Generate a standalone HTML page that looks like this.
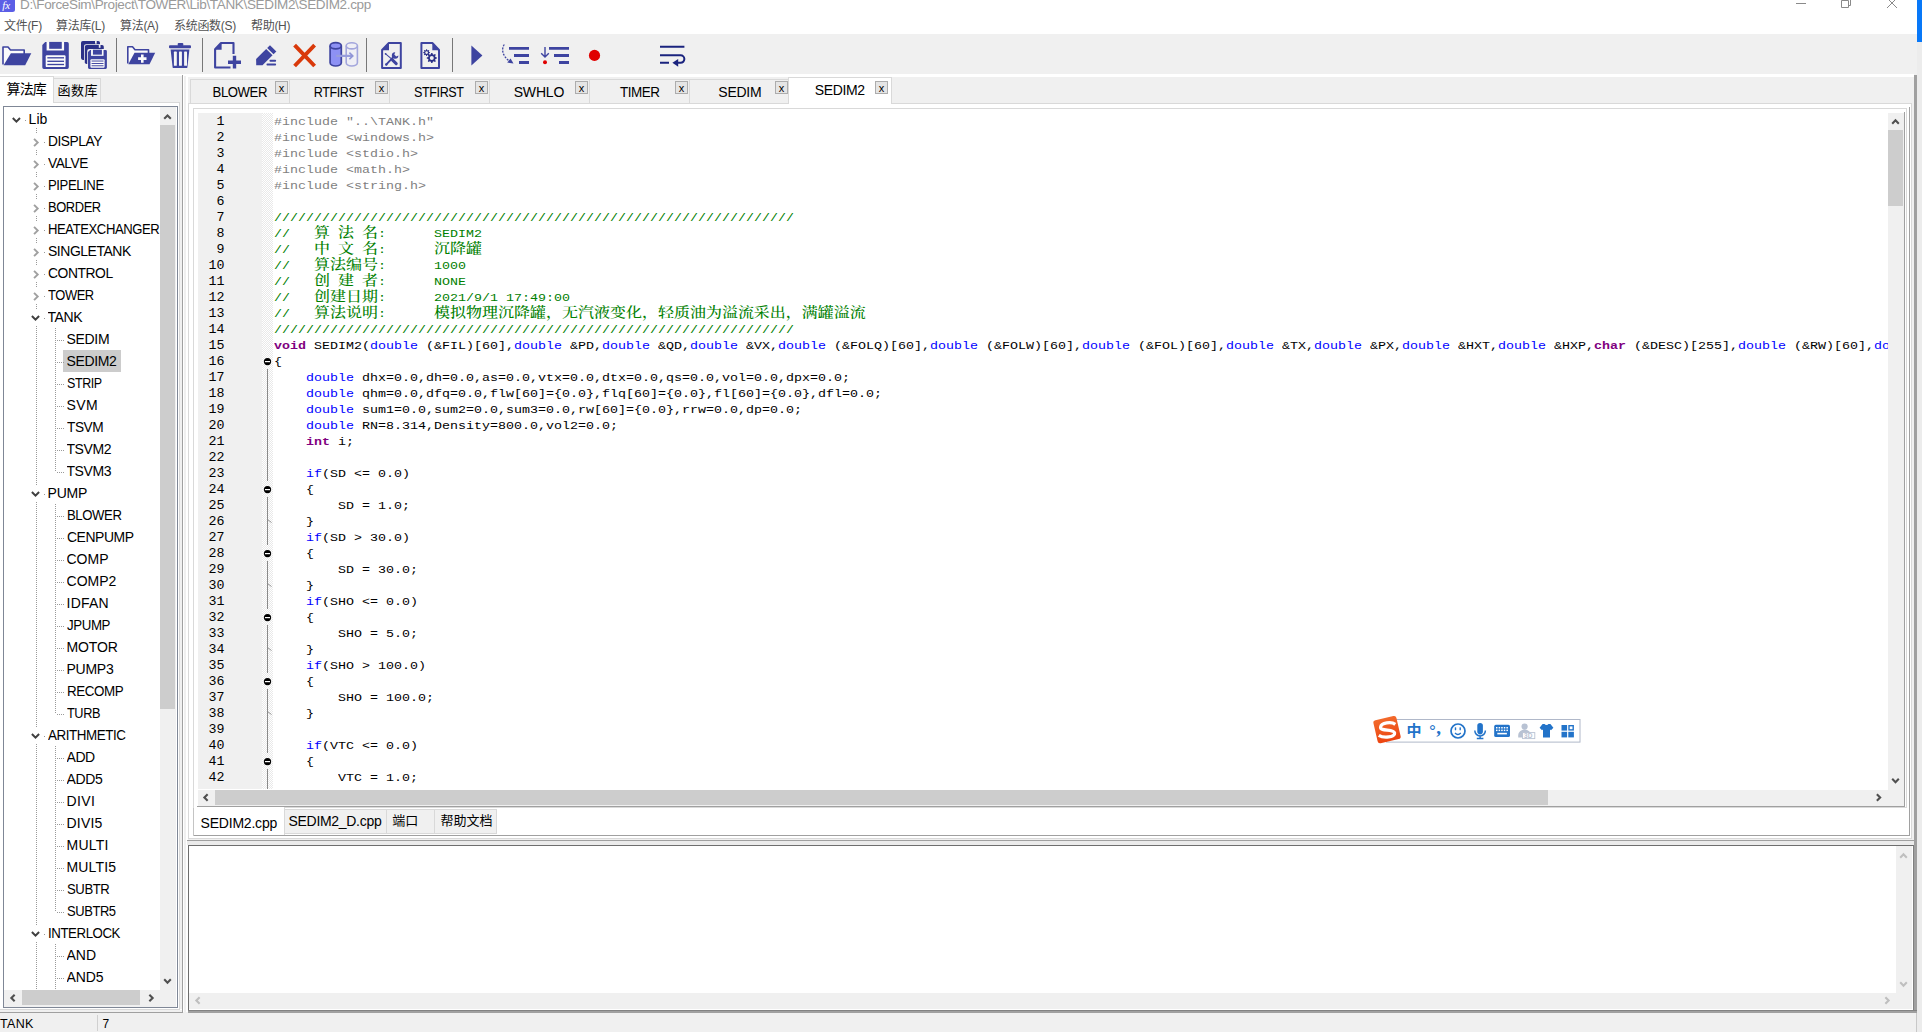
<!DOCTYPE html><html lang="zh"><head><meta charset="utf-8"><title>SEDIM2.cpp</title><style>
*{box-sizing:border-box;margin:0;padding:0}
html,body{width:1922px;height:1032px;overflow:hidden;background:#f0f0f0}
body{position:relative;font-family:"Liberation Sans","Noto Sans CJK SC",sans-serif;color:#000}
div,span,svg{position:absolute}
.t{white-space:nowrap;line-height:1}
.ui{font-size:14px;letter-spacing:0px}
.cj{font-family:"Liberation Sans","Noto Sans CJK SC",sans-serif}
.mono{font-family:"Liberation Mono","Noto Serif CJK SC",monospace;font-size:13.333px;white-space:pre;line-height:16px;height:16px}
.mono .s{left:0;top:0;white-space:pre;line-height:16px;transform:scaleY(0.885);transform-origin:0 11.55px}
.mono .z{top:0.9px;white-space:pre;font-family:"Liberation Mono","Noto Serif CJK SC",monospace;font-size:13.333px;font-weight:500;line-height:16px;transform:scaleX(1.2);transform-origin:0 0}
.pp{color:#7f7f7f}.cm{color:#008000}.kb{color:#0000ff}.kp{color:#800080;font-weight:bold}
.ln{font-family:"Liberation Mono",monospace;font-size:13.333px;line-height:16px;height:16px;text-align:right;color:#000;transform:scaleY(0.89);transform-origin:0 11.55px}

</style></head><body>
<div style="left:0px;top:0px;width:1917px;height:34px;background:#fff;"></div>
<div style="left:1917px;top:0px;width:5px;height:42px;background:#0878f8;"></div>
<div style="left:1917px;top:42px;width:5px;height:990px;background:#ececec;"></div>
<svg style="left:0;top:0" width="15" height="12" viewBox="0 0 15 12"><path d="M0 0H15V9.5a2.5 2.5 0 0 1-2.5 2.5H0z" fill="#5b5ee6"/><text x="2.2" y="8.5" font-family="Liberation Serif,serif" font-style="italic" font-size="11" fill="#fff">fx</text></svg>
<div class="t" style="left:20px;top:-2.2px;font-size:13.5px;color:#9a9a9a;letter-spacing:-0.34px" id="title">D:\ForceSim\Project\TOWER\Lib\TANK\SEDIM2\SEDIM2.cpp</div>
<svg style="left:1790px;top:0" width="120" height="12" viewBox="0 0 120 12" fill="none" stroke="#8a8a8a" stroke-width="1"><path d="M6 3.5H16"/><path d="M51.5 0.5H58.5V7.5H51.5Z"/><path d="M58.5 5.5H60.5V-1"/><path d="M97 -2L107 8M107 -2L97 8"/></svg>
<div class="t cj" id="menu0" style="left:4px;top:19px;font-size:12px;line-height:14px;color:#525252;letter-spacing:-0.3px">文件(F)</div>
<div class="t cj" id="menu1" style="left:56px;top:19px;font-size:12px;line-height:14px;color:#525252;letter-spacing:-0.3px">算法库(L)</div>
<div class="t cj" id="menu2" style="left:120px;top:19px;font-size:12px;line-height:14px;color:#525252;letter-spacing:-0.3px">算法(A)</div>
<div class="t cj" id="menu3" style="left:174px;top:19px;font-size:12px;line-height:14px;color:#525252;letter-spacing:-0.3px">系统函数(S)</div>
<div class="t cj" id="menu4" style="left:251px;top:19px;font-size:12px;line-height:14px;color:#525252;letter-spacing:-0.3px">帮助(H)</div>
<div style="left:0px;top:74px;width:1914px;height:2px;background:#fff;"></div>
<div style="left:186px;top:76px;width:1728px;height:1px;background:#fff;"></div>
<div style="left:182px;top:75px;width:1px;height:937px;background:#a0a0a0;"></div>
<div style="left:183px;top:76px;width:1px;height:936px;background:#fff;"></div>
<div style="left:186px;top:76px;width:2px;height:936px;background:#fff;"></div>
<div style="left:1914px;top:75px;width:3px;height:938px;background:#a0a0a0;"></div>
<div style="left:1916px;top:1013px;width:1px;height:19px;background:#c8c8c8;"></div>
<div style="left:0px;top:102px;width:180px;height:908px;border:1px solid #d9d9d9;border-left:none;"></div>
<div style="left:0px;top:1009px;width:182px;height:1px;background:#fff;"></div>
<div style="left:0px;top:1012px;width:183px;height:1px;background:#a0a0a0;"></div>
<svg style="left:0;top:34px" width="720" height="40" viewBox="0 34 720 40"><rect x="116" y="38" width="1" height="34" fill="#777"/><rect x="202" y="38" width="1" height="34" fill="#777"/><rect x="366" y="38" width="1" height="34" fill="#777"/><rect x="452" y="38" width="1" height="34" fill="#777"/><path d="M3 64.5V47H8L10.5 50H24.2V54" fill="#fbfbfb" stroke="#3e44a0" stroke-width="1.6" stroke-linejoin="round"/><path d="M10.9 53.3H31.3L25.2 65.2H3.6Z" fill="#3e44a0"/><path d="M45.214999999999996 42.1H67.2a1.6 1.6 0 0 1 1.6 1.6V67.30000000000001a1.6 1.6 0 0 1 -1.6 1.6H43.9a1.6 1.6 0 0 1 -1.6 -1.6V45.015Z" fill="#3e44a0"/><rect x="46.592999999999996" y="41.9" width="17.490000000000002" height="8.5884" fill="#fbfbfb"/><rect x="49.19" y="41.9" width="12.587499999999999" height="6.9" fill="#3e44a0"/><rect x="45.692" y="55.205200000000005" width="19.875" height="11.8992" rx="1.2" fill="#fbfbfb"/><rect x="47.334999999999994" y="57.1348" width="16.695" height="1.34" fill="#3e44a0"/><rect x="47.334999999999994" y="60.6188" width="16.695" height="1.34" fill="#3e44a0"/><rect x="47.334999999999994" y="63.8348" width="16.695" height="1.34" fill="#3e44a0"/><rect x="81" y="40.9" width="19" height="19" rx="1.8" fill="#2b3088"/><rect x="95" y="40.5" width="1.7" height="3.2" fill="#f0f0f0"/><rect x="84" y="44.2" width="20.6" height="20" rx="2" fill="#f0f0f0"/><rect x="84.8" y="45" width="19" height="19" rx="1.8" fill="#2b3088"/><rect x="98.8" y="44.6" width="1.7" height="3.2" fill="#f0f0f0"/><rect x="87.2" y="49.1" width="20.6" height="20.4" rx="2" fill="#f0f0f0"/><path d="M90.079 49.9H105.62a1.2800000000000002 1.2800000000000002 0 0 1 1.2800000000000002 1.2800000000000002V67.62a1.2800000000000002 1.2800000000000002 0 0 1 -1.2800000000000002 1.2800000000000002H89.28a1.2800000000000002 1.2800000000000002 0 0 1 -1.2800000000000002 -1.2800000000000002V51.979Z" fill="#3e44a0"/><rect x="91.0618" y="49.699999999999996" width="12.474" height="6.147" fill="#fbfbfb"/><rect x="92.914" y="49.699999999999996" width="8.9775" height="4.95" fill="#3e44a0"/><rect x="90.4192" y="59.191" width="14.174999999999999" height="8.436" rx="0.96" fill="#fbfbfb"/><rect x="91.591" y="60.559" width="11.907" height="0.9500000000000001" fill="#3e44a0"/><rect x="91.591" y="63.028999999999996" width="11.907" height="0.9500000000000001" fill="#3e44a0"/><rect x="91.591" y="65.309" width="11.907" height="0.9500000000000001" fill="#3e44a0"/><path d="M127.8 63.5V46.8H132.5L135 49.8H148.5V53.5" fill="#fbfbfb" stroke="#3e44a0" stroke-width="1.6" stroke-linejoin="round"/><path d="M134.5 52.8H155.2L149.5 64.3H128.3Z" fill="#3e44a0"/><path d="M142.3 54.4V62.8M138.1 58.6H146.5" stroke="#fbfbfb" stroke-width="2.6"/><rect x="177.7" y="43" width="5.6" height="3" rx="1" fill="#3e44a0"/><rect x="169" y="45.3" width="22" height="3" rx="1" fill="#3e44a0"/><path d="M170.6 49.6H189.4L187.4 67.2a1 1 0 0 1-1 .9H173.6a1 1 0 0 1-1-.9Z" fill="#3e44a0"/><rect x="173.9" y="51.6" width="2.9" height="14.2" rx="0.6" fill="#f6f6f6"/><rect x="179.0" y="51.6" width="2.9" height="14.2" rx="0.6" fill="#f6f6f6"/><rect x="184.1" y="51.6" width="2.9" height="14.2" rx="0.6" fill="#f6f6f6"/><path d="M233.5 54V43H221L215.1 49.2V67.5H230.5" fill="none" stroke="#3e44a0" stroke-width="2.1" stroke-linejoin="round"/><path d="M221.6 43V49.8H215Z" fill="#3e44a0"/><path d="M234.5 55.8V68.6M228 62.2H241" stroke="#3e44a0" stroke-width="3.4"/><g transform="translate(256.2,65.3) rotate(-45)" fill="#3e44a0"><path d="M0 0L4.4 -4.5H18.6V4.5H4.4Z"/><rect x="20" y="-4.5" width="4" height="9"/></g><path d="M270.4 60.7H275.2M267.4 64.5H275.2" stroke="#3e44a0" stroke-width="1.9" stroke-linecap="round"/><path d="M294.6 45.2L314.6 66M314.6 45.2L294.6 66" stroke="#d9390a" stroke-width="3.9"/><path d="M330.1 45.8V62.8A5.6 3.2 0 0 0 341.3 62.8V45.8" fill="#8d91f4" stroke="#3e44a0" stroke-width="1.7"/><ellipse cx="335.7" cy="45.8" rx="5.6" ry="3.1" fill="#8d91f4" stroke="#3e44a0" stroke-width="1.7"/><path d="M346.2 45.8V62.8A5.6 3.2 0 0 0 357.4 62.8V45.8" fill="#efeff5" stroke="#a3a6dc" stroke-width="1.6"/><ellipse cx="351.8" cy="45.8" rx="5.6" ry="3.1" fill="#efeff5" stroke="#a3a6dc" stroke-width="1.6"/><path d="M337 55.9H352" fill="none" stroke="#989ddb" stroke-width="2.3" stroke-linecap="round"/><path d="M349.4 52.6L352.8 55.9L349.4 59.2" fill="none" stroke="#8f94d6" stroke-width="1.6"/><path d="M400.8 43.1H388.6L382.1 50V67.9H400.8Z" fill="none" stroke="#3e44a0" stroke-width="2" stroke-linejoin="round"/><path d="M389 43.2V50.3H382.2Z" fill="#3e44a0"/><path d="M385.6 53.9L391.8 59.2" stroke="#3e44a0" stroke-width="1.1" stroke-linecap="round"/><circle cx="385.6" cy="53.8" r="0.9" fill="#3e44a0"/><path d="M392.6 60.2L396.2 63.6" stroke="#3e44a0" stroke-width="3" stroke-linecap="round"/><path d="M386.4 64.4L392.8 57.6" stroke="#3e44a0" stroke-width="1.9" stroke-linecap="round"/><circle cx="386.3" cy="64.5" r="1.2" fill="#3e44a0"/><path d="M395.3 52.2A3.3 3.3 0 1 0 398.4 55.6L396.2 56.6L394.3 54.6Z" fill="#3e44a0"/><path d="M421.4 43.1H432.6L439 50V67.9H421.4Z" fill="none" stroke="#3e44a0" stroke-width="2" stroke-linejoin="round"/><path d="M432.3 43.2V50.3H439.2Z" fill="#3e44a0"/><path d="M429.98 52.20L429.98 53.00L429.01 53.28L428.78 53.82L429.27 54.70L428.70 55.27L427.82 54.78L427.28 55.01L427.00 55.98L426.20 55.98L425.92 55.01L425.38 54.78L424.50 55.27L423.93 54.70L424.42 53.82L424.19 53.28L423.22 53.00L423.22 52.20L424.19 51.92L424.42 51.38L423.93 50.50L424.50 49.93L425.38 50.42L425.92 50.19L426.20 49.22L427.00 49.22L427.28 50.19L427.82 50.42L428.70 49.93L429.27 50.50L428.78 51.38L429.01 51.92ZM427.95000000000005 52.6A1.35 1.35 0 1 0 425.25 52.6A1.35 1.35 0 1 0 427.95000000000005 52.6Z" fill="#2b3088" fill-rule="evenodd"/><path d="M436.86 57.40L436.86 58.60L435.46 59.03L435.12 59.86L435.81 61.16L434.96 62.01L433.66 61.32L432.83 61.66L432.40 63.06L431.20 63.06L430.77 61.66L429.94 61.32L428.64 62.01L427.79 61.16L428.48 59.86L428.14 59.03L426.74 58.60L426.74 57.40L428.14 56.97L428.48 56.14L427.79 54.84L428.64 53.99L429.94 54.68L430.77 54.34L431.20 52.94L432.40 52.94L432.83 54.34L433.66 54.68L434.96 53.99L435.81 54.84L435.12 56.14L435.46 56.97ZM433.8 58.0A2.0 2.0 0 1 0 429.8 58.0A2.0 2.0 0 1 0 433.8 58.0Z" fill="#2b3088" fill-rule="evenodd"/><path d="M471.4 45.5L482.4 55.5L471.4 65.4Z" fill="#3e44a0"/><path d="M509 48.4H529M514 55.5H529M519 62.5H529" stroke="#3e44a0" stroke-width="2.8"/><path d="M504.3 44.5C500.5 50 503.5 57.5 510.5 61.8" fill="none" stroke="#3e44a0" stroke-width="1.3" stroke-dasharray="2 1.2"/><path d="M513.5 63.4L507.2 62.6L510.6 58.4Z" fill="#3e44a0"/><path d="M549 48.4H569M554 55.5H569M559 62.5H569" stroke="#3e44a0" stroke-width="2.8"/><path d="M545 47V57M541.2 53.2L545 57L548.8 53.2" fill="none" stroke="#3e44a0" stroke-width="1.4"/><circle cx="545" cy="62.2" r="2" fill="#e00000"/><circle cx="594.5" cy="55.4" r="5.6" fill="#e00000"/><path d="M660 46.8H684.4M660 55.3H680.6A3.7 3.7 0 0 1 680.6 62.8H676M660 62.8H669" fill="none" stroke="#1a237e" stroke-width="2"/><path d="M672.4 62.8L678.2 59V66.8Z" fill="#1a237e"/></svg>
<div style="left:0px;top:102px;width:180px;height:908px;background:#fff;border:1px solid #d9d9d9;border-left:none;"></div>
<div style="left:0px;top:76px;width:54px;height:27px;background:#fff;border:1px solid #d9d9d9;border-left:none;border-bottom:none;"></div>
<div style="left:53px;top:78px;width:48px;height:25px;background:#f0f0f0;border:1px solid #d9d9d9;"></div>
<div class="t cj" id="ltab0" style="left:6.5px;top:79.5px;font-size:14px;line-height:18px;letter-spacing:-0.85px">算法库</div>
<div class="t cj" id="ltab1" style="left:57.6px;top:82.3px;font-size:13px;line-height:18px;letter-spacing:0.5px">函数库</div>
<div style="left:3px;top:106px;width:175px;height:902px;background:#fff;border:1px solid #7f8796;"></div>
<div style="left:160px;top:107px;width:16px;height:883px;background:#f0f0f0;"></div>
<div style="left:160px;top:125px;width:15px;height:584px;background:#cdcdcd;"></div>
<div style="left:4px;top:990px;width:172px;height:17px;background:#f0f0f0;"></div>
<div style="left:22px;top:990px;width:118px;height:15px;background:#cdcdcd;"></div>
<div style="left:28.5px;top:111px;width:130px;height:16px;overflow:hidden"><div class="t ui" id="tr0" style="left:0;top:0;line-height:16px;letter-spacing:0.1px;">Lib</div></div><div style="left:47.5px;top:133px;width:130px;height:16px;overflow:hidden"><div class="t ui" id="tr1" style="left:0;top:0;line-height:16px;letter-spacing:-0.45px;transform:scaleX(0.9816);transform-origin:0 0;">DISPLAY</div></div><div style="left:47.5px;top:155px;width:130px;height:16px;overflow:hidden"><div class="t ui" id="tr2" style="left:0;top:0;line-height:16px;letter-spacing:-0.45px;transform:scaleX(0.9782);transform-origin:0 0;">VALVE</div></div><div style="left:47.5px;top:177px;width:130px;height:16px;overflow:hidden"><div class="t ui" id="tr3" style="left:0;top:0;line-height:16px;letter-spacing:-0.45px;transform:scaleX(0.938);transform-origin:0 0;">PIPELINE</div></div><div style="left:47.5px;top:199px;width:130px;height:16px;overflow:hidden"><div class="t ui" id="tr4" style="left:0;top:0;line-height:16px;letter-spacing:-0.45px;transform:scaleX(0.922);transform-origin:0 0;">BORDER</div></div><div style="left:47.5px;top:221px;width:112px;height:16px;overflow:hidden"><div class="t ui" id="tr5" style="left:0;top:0;line-height:16px;letter-spacing:-0.45px;transform:scaleX(0.9348);transform-origin:0 0;">HEATEXCHANGER</div></div><div style="left:47.5px;top:243px;width:130px;height:16px;overflow:hidden"><div class="t ui" id="tr6" style="left:0;top:0;line-height:16px;letter-spacing:-0.45px;transform:scaleX(0.9957);transform-origin:0 0;">SINGLETANK</div></div><div style="left:47.5px;top:265px;width:130px;height:16px;overflow:hidden"><div class="t ui" id="tr7" style="left:0;top:0;line-height:16px;letter-spacing:-0.45px;transform:scaleX(0.9907);transform-origin:0 0;">CONTROL</div></div><div style="left:47.5px;top:287px;width:130px;height:16px;overflow:hidden"><div class="t ui" id="tr8" style="left:0;top:0;line-height:16px;letter-spacing:-0.45px;transform:scaleX(0.9228);transform-origin:0 0;">TOWER</div></div><div style="left:47.5px;top:309px;width:130px;height:16px;overflow:hidden"><div class="t ui" id="tr9" style="left:0;top:0;line-height:16px;letter-spacing:-0.4px;">TANK</div></div><div style="left:66.5px;top:331px;width:130px;height:16px;overflow:hidden"><div class="t ui" id="tr10" style="left:0;top:0;line-height:16px;letter-spacing:-0.32px;">SEDIM</div></div><div style="left:63px;top:350px;width:58px;height:22px;background:#cccccc"></div><div style="left:66.5px;top:353px;width:130px;height:16px;overflow:hidden"><div class="t ui" id="tr11" style="left:0;top:0;line-height:16px;letter-spacing:-0.36px;">SEDIM2</div></div><div style="left:66.5px;top:375px;width:130px;height:16px;overflow:hidden"><div class="t ui" id="tr12" style="left:0;top:0;line-height:16px;letter-spacing:-0.45px;transform:scaleX(0.8927);transform-origin:0 0;">STRIP</div></div><div style="left:66.5px;top:397px;width:130px;height:16px;overflow:hidden"><div class="t ui" id="tr13" style="left:0;top:0;line-height:16px;letter-spacing:0.4px;">SVM</div></div><div style="left:66.5px;top:419px;width:130px;height:16px;overflow:hidden"><div class="t ui" id="tr14" style="left:0;top:0;line-height:16px;letter-spacing:-0.45px;transform:scaleX(0.9768);transform-origin:0 0;">TSVM</div></div><div style="left:66.5px;top:441px;width:130px;height:16px;overflow:hidden"><div class="t ui" id="tr15" style="left:0;top:0;line-height:16px;letter-spacing:-0.43px;">TSVM2</div></div><div style="left:66.5px;top:463px;width:130px;height:16px;overflow:hidden"><div class="t ui" id="tr16" style="left:0;top:0;line-height:16px;letter-spacing:-0.43px;">TSVM3</div></div><div style="left:47.5px;top:485px;width:130px;height:16px;overflow:hidden"><div class="t ui" id="tr17" style="left:0;top:0;line-height:16px;letter-spacing:-0.2px;">PUMP</div></div><div style="left:66.5px;top:507px;width:130px;height:16px;overflow:hidden"><div class="t ui" id="tr18" style="left:0;top:0;line-height:16px;letter-spacing:-0.45px;transform:scaleX(0.9392);transform-origin:0 0;">BLOWER</div></div><div style="left:66.5px;top:529px;width:130px;height:16px;overflow:hidden"><div class="t ui" id="tr19" style="left:0;top:0;line-height:16px;letter-spacing:-0.45px;transform:scaleX(0.9954);transform-origin:0 0;">CENPUMP</div></div><div style="left:66.5px;top:551px;width:130px;height:16px;overflow:hidden"><div class="t ui" id="tr20" style="left:0;top:0;line-height:16px;letter-spacing:0.0px;">COMP</div></div><div style="left:66.5px;top:573px;width:130px;height:16px;overflow:hidden"><div class="t ui" id="tr21" style="left:0;top:0;line-height:16px;letter-spacing:0.03px;">COMP2</div></div><div style="left:66.5px;top:595px;width:130px;height:16px;overflow:hidden"><div class="t ui" id="tr22" style="left:0;top:0;line-height:16px;letter-spacing:0.25px;">IDFAN</div></div><div style="left:66.5px;top:617px;width:130px;height:16px;overflow:hidden"><div class="t ui" id="tr23" style="left:0;top:0;line-height:16px;letter-spacing:-0.45px;transform:scaleX(0.9513);transform-origin:0 0;">JPUMP</div></div><div style="left:66.5px;top:639px;width:130px;height:16px;overflow:hidden"><div class="t ui" id="tr24" style="left:0;top:0;line-height:16px;letter-spacing:-0.1px;">MOTOR</div></div><div style="left:66.5px;top:661px;width:130px;height:16px;overflow:hidden"><div class="t ui" id="tr25" style="left:0;top:0;line-height:16px;letter-spacing:-0.25px;">PUMP3</div></div><div style="left:66.5px;top:683px;width:130px;height:16px;overflow:hidden"><div class="t ui" id="tr26" style="left:0;top:0;line-height:16px;letter-spacing:-0.45px;transform:scaleX(0.9558);transform-origin:0 0;">RECOMP</div></div><div style="left:66.5px;top:705px;width:130px;height:16px;overflow:hidden"><div class="t ui" id="tr27" style="left:0;top:0;line-height:16px;letter-spacing:-0.45px;transform:scaleX(0.9088);transform-origin:0 0;">TURB</div></div><div style="left:47.5px;top:727px;width:130px;height:16px;overflow:hidden"><div class="t ui" id="tr28" style="left:0;top:0;line-height:16px;letter-spacing:-0.45px;transform:scaleX(0.9561);transform-origin:0 0;">ARITHMETIC</div></div><div style="left:66.5px;top:749px;width:130px;height:16px;overflow:hidden"><div class="t ui" id="tr29" style="left:0;top:0;line-height:16px;letter-spacing:-0.45px;">ADD</div></div><div style="left:66.5px;top:771px;width:130px;height:16px;overflow:hidden"><div class="t ui" id="tr30" style="left:0;top:0;line-height:16px;letter-spacing:-0.33px;">ADD5</div></div><div style="left:66.5px;top:793px;width:130px;height:16px;overflow:hidden"><div class="t ui" id="tr31" style="left:0;top:0;line-height:16px;letter-spacing:0.4px;">DIVI</div></div><div style="left:66.5px;top:815px;width:130px;height:16px;overflow:hidden"><div class="t ui" id="tr32" style="left:0;top:0;line-height:16px;letter-spacing:0.22px;">DIVI5</div></div><div style="left:66.5px;top:837px;width:130px;height:16px;overflow:hidden"><div class="t ui" id="tr33" style="left:0;top:0;line-height:16px;letter-spacing:0.25px;">MULTI</div></div><div style="left:66.5px;top:859px;width:130px;height:16px;overflow:hidden"><div class="t ui" id="tr34" style="left:0;top:0;line-height:16px;letter-spacing:0.14px;">MULTI5</div></div><div style="left:66.5px;top:881px;width:130px;height:16px;overflow:hidden"><div class="t ui" id="tr35" style="left:0;top:0;line-height:16px;letter-spacing:-0.45px;transform:scaleX(0.9375);transform-origin:0 0;">SUBTR</div></div><div style="left:66.5px;top:903px;width:130px;height:16px;overflow:hidden"><div class="t ui" id="tr36" style="left:0;top:0;line-height:16px;letter-spacing:-0.45px;transform:scaleX(0.9256);transform-origin:0 0;">SUBTR5</div></div><div style="left:47.5px;top:925px;width:130px;height:16px;overflow:hidden"><div class="t ui" id="tr37" style="left:0;top:0;line-height:16px;letter-spacing:-0.45px;transform:scaleX(0.9469);transform-origin:0 0;">INTERLOCK</div></div><div style="left:66.5px;top:947px;width:130px;height:16px;overflow:hidden"><div class="t ui" id="tr38" style="left:0;top:0;line-height:16px;letter-spacing:0.0px;">AND</div></div><div style="left:66.5px;top:969px;width:130px;height:16px;overflow:hidden"><div class="t ui" id="tr39" style="left:0;top:0;line-height:16px;letter-spacing:-0.13px;">AND5</div></div>
<svg style="left:0;top:0" width="200" height="1032" viewBox="0 0 200 1032"><path d="M164.2 118.85000000000001L167.5 115.55L170.8 118.85000000000001" fill="none" stroke="#505050" stroke-width="2.1"/><path d="M164.2 979.35L167.5 982.65L170.8 979.35" fill="none" stroke="#505050" stroke-width="2.1"/><path d="M14.65 994.7L11.35 998L14.65 1001.3" fill="none" stroke="#505050" stroke-width="2.1"/><path d="M149.35 994.7L152.65 998L149.35 1001.3" fill="none" stroke="#505050" stroke-width="2.1"/><path d="M12.799999999999999 118.0L16.4 121.6L20.0 118.0" fill="none" stroke="#404040" stroke-width="2"/><path d="M25 120.5H26" stroke="#9a9a9a" stroke-width="1" stroke-dasharray="1 1"/><path d="M34.05 138.8L37.75 142.5L34.05 146.2" fill="none" stroke="#a0a0a0" stroke-width="1.9"/><path d="M44 142.5H45" stroke="#9a9a9a" stroke-width="1" stroke-dasharray="1 1"/><path d="M36.5 128V134" stroke="#9a9a9a" stroke-width="1" stroke-dasharray="1 1"/><path d="M34.05 160.8L37.75 164.5L34.05 168.2" fill="none" stroke="#a0a0a0" stroke-width="1.9"/><path d="M44 164.5H45" stroke="#9a9a9a" stroke-width="1" stroke-dasharray="1 1"/><path d="M36.5 150V156" stroke="#9a9a9a" stroke-width="1" stroke-dasharray="1 1"/><path d="M34.05 182.8L37.75 186.5L34.05 190.2" fill="none" stroke="#a0a0a0" stroke-width="1.9"/><path d="M44 186.5H45" stroke="#9a9a9a" stroke-width="1" stroke-dasharray="1 1"/><path d="M36.5 172V178" stroke="#9a9a9a" stroke-width="1" stroke-dasharray="1 1"/><path d="M34.05 204.8L37.75 208.5L34.05 212.2" fill="none" stroke="#a0a0a0" stroke-width="1.9"/><path d="M44 208.5H45" stroke="#9a9a9a" stroke-width="1" stroke-dasharray="1 1"/><path d="M36.5 194V200" stroke="#9a9a9a" stroke-width="1" stroke-dasharray="1 1"/><path d="M34.05 226.8L37.75 230.5L34.05 234.2" fill="none" stroke="#a0a0a0" stroke-width="1.9"/><path d="M44 230.5H45" stroke="#9a9a9a" stroke-width="1" stroke-dasharray="1 1"/><path d="M36.5 216V222" stroke="#9a9a9a" stroke-width="1" stroke-dasharray="1 1"/><path d="M34.05 248.8L37.75 252.5L34.05 256.2" fill="none" stroke="#a0a0a0" stroke-width="1.9"/><path d="M44 252.5H45" stroke="#9a9a9a" stroke-width="1" stroke-dasharray="1 1"/><path d="M36.5 238V244" stroke="#9a9a9a" stroke-width="1" stroke-dasharray="1 1"/><path d="M34.05 270.8L37.75 274.5L34.05 278.2" fill="none" stroke="#a0a0a0" stroke-width="1.9"/><path d="M44 274.5H45" stroke="#9a9a9a" stroke-width="1" stroke-dasharray="1 1"/><path d="M36.5 260V266" stroke="#9a9a9a" stroke-width="1" stroke-dasharray="1 1"/><path d="M34.05 292.8L37.75 296.5L34.05 300.2" fill="none" stroke="#a0a0a0" stroke-width="1.9"/><path d="M44 296.5H45" stroke="#9a9a9a" stroke-width="1" stroke-dasharray="1 1"/><path d="M36.5 282V288" stroke="#9a9a9a" stroke-width="1" stroke-dasharray="1 1"/><path d="M31.9 316.0L35.5 319.6L39.1 316.0" fill="none" stroke="#404040" stroke-width="2"/><path d="M44 318.5H45" stroke="#9a9a9a" stroke-width="1" stroke-dasharray="1 1"/><path d="M36.5 304V310" stroke="#9a9a9a" stroke-width="1" stroke-dasharray="1 1"/><path d="M57 340.5H64" stroke="#9a9a9a" stroke-width="1" stroke-dasharray="1 1"/><path d="M57 362.5H64" stroke="#9a9a9a" stroke-width="1" stroke-dasharray="1 1"/><path d="M57 384.5H64" stroke="#9a9a9a" stroke-width="1" stroke-dasharray="1 1"/><path d="M57 406.5H64" stroke="#9a9a9a" stroke-width="1" stroke-dasharray="1 1"/><path d="M57 428.5H64" stroke="#9a9a9a" stroke-width="1" stroke-dasharray="1 1"/><path d="M57 450.5H64" stroke="#9a9a9a" stroke-width="1" stroke-dasharray="1 1"/><path d="M57 472.5H64" stroke="#9a9a9a" stroke-width="1" stroke-dasharray="1 1"/><path d="M31.9 492.0L35.5 495.6L39.1 492.0" fill="none" stroke="#404040" stroke-width="2"/><path d="M44 494.5H45" stroke="#9a9a9a" stroke-width="1" stroke-dasharray="1 1"/><path d="M36.5 480V486" stroke="#9a9a9a" stroke-width="1" stroke-dasharray="1 1"/><path d="M57 516.5H64" stroke="#9a9a9a" stroke-width="1" stroke-dasharray="1 1"/><path d="M57 538.5H64" stroke="#9a9a9a" stroke-width="1" stroke-dasharray="1 1"/><path d="M57 560.5H64" stroke="#9a9a9a" stroke-width="1" stroke-dasharray="1 1"/><path d="M57 582.5H64" stroke="#9a9a9a" stroke-width="1" stroke-dasharray="1 1"/><path d="M57 604.5H64" stroke="#9a9a9a" stroke-width="1" stroke-dasharray="1 1"/><path d="M57 626.5H64" stroke="#9a9a9a" stroke-width="1" stroke-dasharray="1 1"/><path d="M57 648.5H64" stroke="#9a9a9a" stroke-width="1" stroke-dasharray="1 1"/><path d="M57 670.5H64" stroke="#9a9a9a" stroke-width="1" stroke-dasharray="1 1"/><path d="M57 692.5H64" stroke="#9a9a9a" stroke-width="1" stroke-dasharray="1 1"/><path d="M57 714.5H64" stroke="#9a9a9a" stroke-width="1" stroke-dasharray="1 1"/><path d="M31.9 734.0L35.5 737.5999999999999L39.1 734.0" fill="none" stroke="#404040" stroke-width="2"/><path d="M44 736.5H45" stroke="#9a9a9a" stroke-width="1" stroke-dasharray="1 1"/><path d="M36.5 722V728" stroke="#9a9a9a" stroke-width="1" stroke-dasharray="1 1"/><path d="M57 758.5H64" stroke="#9a9a9a" stroke-width="1" stroke-dasharray="1 1"/><path d="M57 780.5H64" stroke="#9a9a9a" stroke-width="1" stroke-dasharray="1 1"/><path d="M57 802.5H64" stroke="#9a9a9a" stroke-width="1" stroke-dasharray="1 1"/><path d="M57 824.5H64" stroke="#9a9a9a" stroke-width="1" stroke-dasharray="1 1"/><path d="M57 846.5H64" stroke="#9a9a9a" stroke-width="1" stroke-dasharray="1 1"/><path d="M57 868.5H64" stroke="#9a9a9a" stroke-width="1" stroke-dasharray="1 1"/><path d="M57 890.5H64" stroke="#9a9a9a" stroke-width="1" stroke-dasharray="1 1"/><path d="M57 912.5H64" stroke="#9a9a9a" stroke-width="1" stroke-dasharray="1 1"/><path d="M31.9 932.0L35.5 935.5999999999999L39.1 932.0" fill="none" stroke="#404040" stroke-width="2"/><path d="M44 934.5H45" stroke="#9a9a9a" stroke-width="1" stroke-dasharray="1 1"/><path d="M36.5 920V926" stroke="#9a9a9a" stroke-width="1" stroke-dasharray="1 1"/><path d="M57 956.5H64" stroke="#9a9a9a" stroke-width="1" stroke-dasharray="1 1"/><path d="M57 978.5H64" stroke="#9a9a9a" stroke-width="1" stroke-dasharray="1 1"/><path d="M36.5 326V480" stroke="#9a9a9a" stroke-width="1" stroke-dasharray="1 1"/><path d="M55.5 328V472" stroke="#9a9a9a" stroke-width="1" stroke-dasharray="1 1"/><path d="M36.5 502V722" stroke="#9a9a9a" stroke-width="1" stroke-dasharray="1 1"/><path d="M55.5 504V714" stroke="#9a9a9a" stroke-width="1" stroke-dasharray="1 1"/><path d="M36.5 744V920" stroke="#9a9a9a" stroke-width="1" stroke-dasharray="1 1"/><path d="M55.5 746V912" stroke="#9a9a9a" stroke-width="1" stroke-dasharray="1 1"/><path d="M36.5 942V989" stroke="#9a9a9a" stroke-width="1" stroke-dasharray="1 1"/><path d="M55.5 944V989" stroke="#9a9a9a" stroke-width="1" stroke-dasharray="1 1"/></svg>
<div class="t" id="st0" style="left:0px;top:1017px;font-size:12.5px;line-height:14px;letter-spacing:0.35px">TANK</div>
<div style="left:97px;top:1015px;width:1px;height:16px;background:#d0d0d0;"></div>
<div class="t" id="st1" style="left:102.5px;top:1017px;font-size:12px;line-height:14px">7</div>
<div style="left:188px;top:103px;width:1724px;height:736px;background:#fff;border:1px solid #d9d9d9;"></div>
<div style="left:190px;top:79px;width:100px;height:25px;background:#f0f0f0;border:1px solid #d9d9d9;"></div>
<div class="t ui" id="tab0" style="left:190px;top:84px;width:100px;text-align:center;line-height:16px;letter-spacing:-0.45px;text-indent:-0.45px;transform:scaleX(0.9392)">BLOWER</div>
<div style="left:275px;top:81px;width:13px;height:13px;background:#e5e5e5;border:1px solid #adadad"></div>
<div class="t" style="left:275px;top:81.5px;width:13px;text-align:center;font-size:11px;line-height:13px">x</div>
<div style="left:290px;top:79px;width:100px;height:25px;background:#f0f0f0;border:1px solid #d9d9d9;border-left:none;"></div>
<div class="t ui" id="tab1" style="left:289px;top:84px;width:100px;text-align:center;line-height:16px;letter-spacing:-0.45px;text-indent:-0.45px;transform:scaleX(0.8958)">RTFIRST</div>
<div style="left:375px;top:81px;width:13px;height:13px;background:#e5e5e5;border:1px solid #adadad"></div>
<div class="t" style="left:375px;top:81.5px;width:13px;text-align:center;font-size:11px;line-height:13px">x</div>
<div style="left:390px;top:79px;width:100px;height:25px;background:#f0f0f0;border:1px solid #d9d9d9;border-left:none;"></div>
<div class="t ui" id="tab2" style="left:389px;top:84px;width:100px;text-align:center;line-height:16px;letter-spacing:-0.45px;text-indent:-0.45px;transform:scaleX(0.8958)">STFIRST</div>
<div style="left:475px;top:81px;width:13px;height:13px;background:#e5e5e5;border:1px solid #adadad"></div>
<div class="t" style="left:475px;top:81.5px;width:13px;text-align:center;font-size:11px;line-height:13px">x</div>
<div style="left:490px;top:79px;width:100px;height:25px;background:#f0f0f0;border:1px solid #d9d9d9;border-left:none;"></div>
<div class="t ui" id="tab3" style="left:489px;top:84px;width:100px;text-align:center;line-height:16px;letter-spacing:-0.17px;text-indent:-0.17px;transform:scaleX(1.0)">SWHLO</div>
<div style="left:575px;top:81px;width:13px;height:13px;background:#e5e5e5;border:1px solid #adadad"></div>
<div class="t" style="left:575px;top:81.5px;width:13px;text-align:center;font-size:11px;line-height:13px">x</div>
<div style="left:590px;top:79px;width:100px;height:25px;background:#f0f0f0;border:1px solid #d9d9d9;border-left:none;"></div>
<div class="t ui" id="tab4" style="left:590px;top:84px;width:100px;text-align:center;line-height:16px;letter-spacing:-0.45px;text-indent:-0.45px;transform:scaleX(0.9606)">TIMER</div>
<div style="left:675px;top:81px;width:13px;height:13px;background:#e5e5e5;border:1px solid #adadad"></div>
<div class="t" style="left:675px;top:81.5px;width:13px;text-align:center;font-size:11px;line-height:13px">x</div>
<div style="left:690px;top:79px;width:100px;height:25px;background:#f0f0f0;border:1px solid #d9d9d9;border-left:none;"></div>
<div class="t ui" id="tab5" style="left:690px;top:84px;width:100px;text-align:center;line-height:16px;letter-spacing:-0.25px;text-indent:-0.25px;transform:scaleX(1.0)">SEDIM</div>
<div style="left:775px;top:81px;width:13px;height:13px;background:#e5e5e5;border:1px solid #adadad"></div>
<div class="t" style="left:775px;top:81.5px;width:13px;text-align:center;font-size:11px;line-height:13px">x</div>
<div style="left:788px;top:77px;width:104px;height:27px;background:#fff;border:1px solid #d9d9d9;border-bottom:none;"></div>
<div class="t ui" id="tab6" style="left:790px;top:82px;width:100px;text-align:center;line-height:16px;letter-spacing:-0.36px;text-indent:-0.36px;transform:scaleX(1.0)">SEDIM2</div>
<div style="left:875px;top:81px;width:13px;height:13px;background:#e5e5e5;border:1px solid #adadad"></div>
<div class="t" style="left:875px;top:81.5px;width:13px;text-align:center;font-size:11px;line-height:13px">x</div>
<div style="left:1909px;top:107px;width:1px;height:729px;background:#a0a0a0;"></div>
<div style="left:194px;top:835px;width:1716px;height:1px;background:#a0a0a0;"></div>
<div style="left:193px;top:108px;width:1714px;height:700px;background:#fff;border:1px solid #d9d9d9;"></div>
<div style="left:1904px;top:112px;width:1px;height:695px;background:#a0a0a0;"></div>
<div style="left:197px;top:806px;width:1708px;height:1px;background:#a0a0a0;"></div>
<div style="left:198px;top:113px;width:64px;height:676px;background:#f0f0f0;"></div>
<div style="left:262px;top:113px;width:11px;height:676px;background:repeating-conic-gradient(#ffffff 0 25%,#e9e9e9 0 50%) 0 0/2px 2px;"></div>
<div style="left:1888px;top:113px;width:16px;height:677px;background:#f0f0f0;"></div>
<div style="left:1888px;top:130px;width:15px;height:76px;background:#cdcdcd;"></div>
<div style="left:198px;top:790px;width:1706px;height:16px;background:#f0f0f0;"></div>
<div style="left:215px;top:790px;width:1333px;height:15px;background:#cdcdcd;"></div>
<div style="left:273px;top:113px;width:1615px;height:677px;overflow:hidden"><div class="mono" style="left:1px;top:0.5px"><span class="s pp" style="left:0px">#include "..\TANK.h"</span></div><div class="mono" style="left:1px;top:16.5px"><span class="s pp" style="left:0px">#include &lt;windows.h&gt;</span></div><div class="mono" style="left:1px;top:32.5px"><span class="s pp" style="left:0px">#include &lt;stdio.h&gt;</span></div><div class="mono" style="left:1px;top:48.5px"><span class="s pp" style="left:0px">#include &lt;math.h&gt;</span></div><div class="mono" style="left:1px;top:64.5px"><span class="s pp" style="left:0px">#include &lt;string.h&gt;</span></div><div class="mono" style="left:1px;top:80.5px"></div><div class="mono" style="left:1px;top:96.5px"><span class="s cm" style="left:0px">/////////////////////////////////////////////////////////////////</span></div><div class="mono" style="left:1px;top:112.5px"><span class="s cm" style="left:0px">//</span><span class="z cm" style="left:40px">算</span><span class="z cm" style="left:64px">法</span><span class="z cm" style="left:88px">名</span><span class="s cm" style="left:104px">:      SEDIM2</span></div><div class="mono" style="left:1px;top:128.5px"><span class="s cm" style="left:0px">//</span><span class="z cm" style="left:40px">中</span><span class="z cm" style="left:64px">文</span><span class="z cm" style="left:88px">名</span><span class="s cm" style="left:104px">:</span><span class="z cm" style="left:160px">沉降罐</span></div><div class="mono" style="left:1px;top:144.5px"><span class="s cm" style="left:0px">//</span><span class="z cm" style="left:40px">算法编号</span><span class="s cm" style="left:104px">:      1000</span></div><div class="mono" style="left:1px;top:160.5px"><span class="s cm" style="left:0px">//</span><span class="z cm" style="left:40px">创</span><span class="z cm" style="left:64px">建</span><span class="z cm" style="left:88px">者</span><span class="s cm" style="left:104px">:      NONE</span></div><div class="mono" style="left:1px;top:176.5px"><span class="s cm" style="left:0px">//</span><span class="z cm" style="left:40px">创建日期</span><span class="s cm" style="left:104px">:      2021/9/1 17:49:00</span></div><div class="mono" style="left:1px;top:192.5px"><span class="s cm" style="left:0px">//</span><span class="z cm" style="left:40px">算法说明</span><span class="s cm" style="left:104px">:</span><span class="z cm" style="left:160px">模拟物理沉降罐，无汽液变化，轻质油为溢流采出，满罐溢流</span></div><div class="mono" style="left:1px;top:208.5px"><span class="s cm" style="left:0px">/////////////////////////////////////////////////////////////////</span></div><div class="mono" style="left:1px;top:224.5px"><span class="s kp" style="left:0px">void</span><span class="s" style="left:40px">SEDIM2(</span><span class="s kb" style="left:96px">double</span><span class="s" style="left:152px">(&amp;FIL)[60],</span><span class="s kb" style="left:240px">double</span><span class="s" style="left:296px">&amp;PD,</span><span class="s kb" style="left:328px">double</span><span class="s" style="left:384px">&amp;QD,</span><span class="s kb" style="left:416px">double</span><span class="s" style="left:472px">&amp;VX,</span><span class="s kb" style="left:504px">double</span><span class="s" style="left:560px">(&amp;FOLQ)[60],</span><span class="s kb" style="left:656px">double</span><span class="s" style="left:712px">(&amp;FOLW)[60],</span><span class="s kb" style="left:808px">double</span><span class="s" style="left:864px">(&amp;FOL)[60],</span><span class="s kb" style="left:952px">double</span><span class="s" style="left:1008px">&amp;TX,</span><span class="s kb" style="left:1040px">double</span><span class="s" style="left:1096px">&amp;PX,</span><span class="s kb" style="left:1128px">double</span><span class="s" style="left:1184px">&amp;HXT,</span><span class="s kb" style="left:1224px">double</span><span class="s" style="left:1280px">&amp;HXP,</span><span class="s kp" style="left:1320px">char</span><span class="s" style="left:1360px">(&amp;DESC)[255],</span><span class="s kb" style="left:1464px">double</span><span class="s" style="left:1520px">(&amp;RW)[60],</span><span class="s kb" style="left:1600px">double</span><span class="s" style="left:1656px">(&amp;RO)[60],</span><span class="s kb" style="left:1736px">double</span><span class="s" style="left:1792px">&amp;RWX)</span></div><div class="mono" style="left:1px;top:240.5px"><span class="s" style="left:0px">{</span></div><div class="mono" style="left:1px;top:256.5px"><span class="s kb" style="left:32px">double</span><span class="s" style="left:88px">dhx=0.0,dh=0.0,as=0.0,vtx=0.0,dtx=0.0,qs=0.0,vol=0.0,dpx=0.0;</span></div><div class="mono" style="left:1px;top:272.5px"><span class="s kb" style="left:32px">double</span><span class="s" style="left:88px">qhm=0.0,dfq=0.0,flw[60]={0.0},flq[60]={0.0},fl[60]={0.0},dfl=0.0;</span></div><div class="mono" style="left:1px;top:288.5px"><span class="s kb" style="left:32px">double</span><span class="s" style="left:88px">sum1=0.0,sum2=0.0,sum3=0.0,rw[60]={0.0},rrw=0.0,dp=0.0;</span></div><div class="mono" style="left:1px;top:304.5px"><span class="s kb" style="left:32px">double</span><span class="s" style="left:88px">RN=8.314,Density=800.0,vol2=0.0;</span></div><div class="mono" style="left:1px;top:320.5px"><span class="s kp" style="left:32px">int</span><span class="s" style="left:64px">i;</span></div><div class="mono" style="left:1px;top:336.5px"></div><div class="mono" style="left:1px;top:352.5px"><span class="s kb" style="left:32px">if</span><span class="s" style="left:48px">(SD &lt;= 0.0)</span></div><div class="mono" style="left:1px;top:368.5px"><span class="s" style="left:32px">{</span></div><div class="mono" style="left:1px;top:384.5px"><span class="s" style="left:64px">SD = 1.0;</span></div><div class="mono" style="left:1px;top:400.5px"><span class="s" style="left:32px">}</span></div><div class="mono" style="left:1px;top:416.5px"><span class="s kb" style="left:32px">if</span><span class="s" style="left:48px">(SD &gt; 30.0)</span></div><div class="mono" style="left:1px;top:432.5px"><span class="s" style="left:32px">{</span></div><div class="mono" style="left:1px;top:448.5px"><span class="s" style="left:64px">SD = 30.0;</span></div><div class="mono" style="left:1px;top:464.5px"><span class="s" style="left:32px">}</span></div><div class="mono" style="left:1px;top:480.5px"><span class="s kb" style="left:32px">if</span><span class="s" style="left:48px">(SHO &lt;= 0.0)</span></div><div class="mono" style="left:1px;top:496.5px"><span class="s" style="left:32px">{</span></div><div class="mono" style="left:1px;top:512.5px"><span class="s" style="left:64px">SHO = 5.0;</span></div><div class="mono" style="left:1px;top:528.5px"><span class="s" style="left:32px">}</span></div><div class="mono" style="left:1px;top:544.5px"><span class="s kb" style="left:32px">if</span><span class="s" style="left:48px">(SHO &gt; 100.0)</span></div><div class="mono" style="left:1px;top:560.5px"><span class="s" style="left:32px">{</span></div><div class="mono" style="left:1px;top:576.5px"><span class="s" style="left:64px">SHO = 100.0;</span></div><div class="mono" style="left:1px;top:592.5px"><span class="s" style="left:32px">}</span></div><div class="mono" style="left:1px;top:608.5px"></div><div class="mono" style="left:1px;top:624.5px"><span class="s kb" style="left:32px">if</span><span class="s" style="left:48px">(VTC &lt;= 0.0)</span></div><div class="mono" style="left:1px;top:640.5px"><span class="s" style="left:32px">{</span></div><div class="mono" style="left:1px;top:656.5px"><span class="s" style="left:64px">VTC = 1.0;</span></div></div>
<div class="ln" style="left:198px;top:113.5px;width:26.5px">1</div><div class="ln" style="left:198px;top:129.5px;width:26.5px">2</div><div class="ln" style="left:198px;top:145.5px;width:26.5px">3</div><div class="ln" style="left:198px;top:161.5px;width:26.5px">4</div><div class="ln" style="left:198px;top:177.5px;width:26.5px">5</div><div class="ln" style="left:198px;top:193.5px;width:26.5px">6</div><div class="ln" style="left:198px;top:209.5px;width:26.5px">7</div><div class="ln" style="left:198px;top:225.5px;width:26.5px">8</div><div class="ln" style="left:198px;top:241.5px;width:26.5px">9</div><div class="ln" style="left:198px;top:257.5px;width:26.5px">10</div><div class="ln" style="left:198px;top:273.5px;width:26.5px">11</div><div class="ln" style="left:198px;top:289.5px;width:26.5px">12</div><div class="ln" style="left:198px;top:305.5px;width:26.5px">13</div><div class="ln" style="left:198px;top:321.5px;width:26.5px">14</div><div class="ln" style="left:198px;top:337.5px;width:26.5px">15</div><div class="ln" style="left:198px;top:353.5px;width:26.5px">16</div><div class="ln" style="left:198px;top:369.5px;width:26.5px">17</div><div class="ln" style="left:198px;top:385.5px;width:26.5px">18</div><div class="ln" style="left:198px;top:401.5px;width:26.5px">19</div><div class="ln" style="left:198px;top:417.5px;width:26.5px">20</div><div class="ln" style="left:198px;top:433.5px;width:26.5px">21</div><div class="ln" style="left:198px;top:449.5px;width:26.5px">22</div><div class="ln" style="left:198px;top:465.5px;width:26.5px">23</div><div class="ln" style="left:198px;top:481.5px;width:26.5px">24</div><div class="ln" style="left:198px;top:497.5px;width:26.5px">25</div><div class="ln" style="left:198px;top:513.5px;width:26.5px">26</div><div class="ln" style="left:198px;top:529.5px;width:26.5px">27</div><div class="ln" style="left:198px;top:545.5px;width:26.5px">28</div><div class="ln" style="left:198px;top:561.5px;width:26.5px">29</div><div class="ln" style="left:198px;top:577.5px;width:26.5px">30</div><div class="ln" style="left:198px;top:593.5px;width:26.5px">31</div><div class="ln" style="left:198px;top:609.5px;width:26.5px">32</div><div class="ln" style="left:198px;top:625.5px;width:26.5px">33</div><div class="ln" style="left:198px;top:641.5px;width:26.5px">34</div><div class="ln" style="left:198px;top:657.5px;width:26.5px">35</div><div class="ln" style="left:198px;top:673.5px;width:26.5px">36</div><div class="ln" style="left:198px;top:689.5px;width:26.5px">37</div><div class="ln" style="left:198px;top:705.5px;width:26.5px">38</div><div class="ln" style="left:198px;top:721.5px;width:26.5px">39</div><div class="ln" style="left:198px;top:737.5px;width:26.5px">40</div><div class="ln" style="left:198px;top:753.5px;width:26.5px">41</div><div class="ln" style="left:198px;top:769.5px;width:26.5px">42</div>
<svg style="left:0;top:0" width="1922" height="1032" viewBox="0 0 1922 1032"><path d="M1892.2 123.65L1895.5 120.35L1898.8 123.65" fill="none" stroke="#505050" stroke-width="2.1"/><path d="M1892.2 778.85L1895.5 782.15L1898.8 778.85" fill="none" stroke="#505050" stroke-width="2.1"/><path d="M207.65 794.2L204.35 797.5L207.65 800.8" fill="none" stroke="#505050" stroke-width="2.1"/><path d="M1876.85 794.2L1880.15 797.5L1876.85 800.8" fill="none" stroke="#505050" stroke-width="2.1"/><circle cx="267.5" cy="361.6" r="3.6" fill="#000"/><rect x="265" y="361" width="5" height="1.2" fill="#fff"/><rect x="267" y="369" width="1" height="16" fill="#8a8a8a"/><rect x="267" y="385" width="1" height="16" fill="#8a8a8a"/><rect x="267" y="401" width="1" height="16" fill="#8a8a8a"/><rect x="267" y="417" width="1" height="16" fill="#8a8a8a"/><rect x="267" y="433" width="1" height="16" fill="#8a8a8a"/><rect x="267" y="449" width="1" height="16" fill="#8a8a8a"/><rect x="267" y="465" width="1" height="16" fill="#8a8a8a"/><circle cx="267.5" cy="489.6" r="3.6" fill="#000"/><rect x="265" y="489" width="5" height="1.2" fill="#fff"/><rect x="267" y="497" width="1" height="16" fill="#8a8a8a"/><rect x="267" y="513" width="1" height="16" fill="#8a8a8a"/><path d="M267.5 519.5L271.5 522.5" stroke="#8a8a8a" stroke-width="0.9"/><rect x="267" y="529" width="1" height="16" fill="#8a8a8a"/><circle cx="267.5" cy="553.6" r="3.6" fill="#000"/><rect x="265" y="553" width="5" height="1.2" fill="#fff"/><rect x="267" y="561" width="1" height="16" fill="#8a8a8a"/><rect x="267" y="577" width="1" height="16" fill="#8a8a8a"/><path d="M267.5 583.5L271.5 586.5" stroke="#8a8a8a" stroke-width="0.9"/><rect x="267" y="593" width="1" height="16" fill="#8a8a8a"/><circle cx="267.5" cy="617.6" r="3.6" fill="#000"/><rect x="265" y="617" width="5" height="1.2" fill="#fff"/><rect x="267" y="625" width="1" height="16" fill="#8a8a8a"/><rect x="267" y="641" width="1" height="16" fill="#8a8a8a"/><path d="M267.5 647.5L271.5 650.5" stroke="#8a8a8a" stroke-width="0.9"/><rect x="267" y="657" width="1" height="16" fill="#8a8a8a"/><circle cx="267.5" cy="681.6" r="3.6" fill="#000"/><rect x="265" y="681" width="5" height="1.2" fill="#fff"/><rect x="267" y="689" width="1" height="16" fill="#8a8a8a"/><rect x="267" y="705" width="1" height="16" fill="#8a8a8a"/><path d="M267.5 711.5L271.5 714.5" stroke="#8a8a8a" stroke-width="0.9"/><rect x="267" y="721" width="1" height="16" fill="#8a8a8a"/><rect x="267" y="737" width="1" height="16" fill="#8a8a8a"/><circle cx="267.5" cy="761.6" r="3.6" fill="#000"/><rect x="265" y="761" width="5" height="1.2" fill="#fff"/><rect x="267" y="769" width="1" height="16" fill="#8a8a8a"/><rect x="267" y="785" width="1" height="4" fill="#8a8a8a"/></svg>
<div style="left:194px;top:807px;width:91px;height:28px;background:#fff;border-right:1px solid #d9d9d9;"></div>
<div style="left:193px;top:808px;width:1px;height:28px;background:#c4c4c4;"></div>
<div style="left:284px;top:809px;width:104px;height:25px;background:#f0f0f0;border:1px solid #d9d9d9;"></div>
<div style="left:386px;top:809px;width:50px;height:25px;background:#f0f0f0;border:1px solid #d9d9d9;"></div>
<div style="left:434px;top:809px;width:63px;height:25px;background:#f0f0f0;border:1px solid #d9d9d9;"></div>
<div class="t ui" id="bt0" style="left:200.5px;top:815px;line-height:16px;letter-spacing:-0.2px">SEDIM2.cpp</div>
<div class="t ui" id="bt1" style="left:288.5px;top:813px;line-height:16px;letter-spacing:-0.3px">SEDIM2_D.cpp</div>
<div class="t cj" id="bt2" style="left:392.3px;top:812px;font-size:13px;line-height:18px;letter-spacing:0px">端口</div>
<div class="t cj" id="bt3" style="left:440.6px;top:812px;font-size:13px;line-height:18px;letter-spacing:0px">帮助文档</div>
<div style="left:187px;top:840px;width:1728px;height:1px;background:#a0a0a0;"></div>
<div style="left:187px;top:841px;width:1727px;height:4px;background:#ebebeb;"></div>
<div style="left:188px;top:845px;width:1726px;height:168px;background:#fff;border:1px solid #6e6e6e;border-right-color:#808080;border-bottom:none;"></div>
<div style="left:188px;top:1010px;width:1729px;height:1px;background:#828282;"></div>
<div style="left:188px;top:1011px;width:1729px;height:2px;background:#a0a0a0;"></div>
<div style="left:1896px;top:846px;width:16px;height:147px;background:#f0f0f0;"></div>
<div style="left:189px;top:993px;width:1723px;height:16px;background:#f0f0f0;"></div>
<div style="left:189px;top:1009px;width:1724px;height:1px;background:#fff;"></div>
<div style="left:1912px;top:846px;width:1px;height:164px;background:#fff;"></div>
<svg style="left:0;top:0" width="1922" height="1032" viewBox="0 0 1922 1032"><path d="M1900.2 857.65L1903.5 854.35L1906.8 857.65" fill="none" stroke="#bfbfbf" stroke-width="2.1"/><path d="M1900.2 982.35L1903.5 985.65L1906.8 982.35" fill="none" stroke="#bfbfbf" stroke-width="2.1"/><path d="M199.65 997.2L196.35 1000.5L199.65 1003.8" fill="none" stroke="#bfbfbf" stroke-width="2.1"/><path d="M1885.35 997.2L1888.65 1000.5L1885.35 1003.8" fill="none" stroke="#bfbfbf" stroke-width="2.1"/></svg>
<svg style="left:1365px;top:710px" width="225" height="40" viewBox="1365 710 225 40"><rect x="1386.5" y="719.5" width="193.5" height="22.6" fill="#fff" stroke="#b0b8c9" stroke-width="1"/><defs><linearGradient id="sg" x1="0" y1="0" x2="0" y2="1"><stop offset="0" stop-color="#f26a2c"/><stop offset="1" stop-color="#ec4410"/></linearGradient></defs><g transform="rotate(-13 1387 729.5)"><rect x="1375.2" y="717.8" width="23.6" height="23.6" rx="2.6" fill="url(#sg)"/></g><path d="M1395.3 724.3C1391.5 721.6 1381.2 722.4 1380.6 727.2C1380.1 731.6 1393.8 728.6 1394.6 733C1395.4 737.4 1383.5 738.3 1378.8 735.3" fill="none" stroke="#fff" stroke-width="3.3" stroke-linecap="butt"/><circle cx="1458" cy="731" r="7" fill="none" stroke="#2273c9" stroke-width="1.7"/><rect x="1454.8" y="727.2" width="1.4" height="3.1" rx="0.6" fill="#2273c9"/><rect x="1459.5" y="727.2" width="1.4" height="3.1" rx="0.6" fill="#2273c9"/><path d="M1455 733Q1457.9 736 1460.8 733" fill="none" stroke="#2273c9" stroke-width="1.3"/><rect x="1477.3" y="723" width="5.6" height="11.4" rx="2.8" fill="#2273c9"/><path d="M1474.8 730.6A5.3 5.3 0 0 0 1485.4 730.6M1480.1 736V738.6M1476.8 738.5H1483.4" fill="none" stroke="#2273c9" stroke-width="1.5"/><rect x="1494.2" y="724.8" width="15.8" height="12.2" rx="1.6" fill="#2273c9"/><rect x="1496.0" y="727.0" width="1.5" height="1.5" fill="#fff"/><rect x="1498.6" y="727.0" width="1.5" height="1.5" fill="#fff"/><rect x="1501.2" y="727.0" width="1.5" height="1.5" fill="#fff"/><rect x="1503.8" y="727.0" width="1.5" height="1.5" fill="#fff"/><rect x="1506.4" y="727.0" width="1.5" height="1.5" fill="#fff"/><rect x="1496.0" y="729.6" width="1.5" height="1.5" fill="#fff"/><rect x="1498.6" y="729.6" width="1.5" height="1.5" fill="#fff"/><rect x="1501.2" y="729.6" width="1.5" height="1.5" fill="#fff"/><rect x="1503.8" y="729.6" width="1.5" height="1.5" fill="#fff"/><rect x="1506.4" y="729.6" width="1.5" height="1.5" fill="#fff"/><rect x="1497.3" y="732.8" width="9.6" height="1.6" fill="#fff"/><circle cx="1524.6" cy="726.6" r="3.1" fill="#b8c2d3"/><path d="M1518.2 737.6V735A6.4 5.4 0 0 1 1531 735V737.6Z" fill="#b8c2d3"/><rect x="1522.6" y="732.6" width="12.2" height="6" fill="#fff" stroke="#b8c2d3" stroke-width="0.9"/><path d="M1542.6 724L1539.6 727.8L1542 730.2L1543 729.4V737.6H1550V729.4L1551 730.2L1553.4 727.8L1550.4 724H1548.4A2 1.4 0 0 1 1544.6 724Z" fill="#2273c9"/><rect x="1561.5" y="725" width="5.6" height="5.6" fill="#2273c9"/><rect x="1561.5" y="731.8" width="5.6" height="5.6" fill="#2273c9"/><rect x="1568.3" y="731.8" width="5.6" height="5.6" fill="#2273c9"/><rect x="1569" y="725.7" width="4.2" height="4.2" fill="#fff" stroke="#2273c9" stroke-width="1.4"/></svg>
<div class="t cj" style="left:1406.5px;top:722px;font-size:15px;line-height:18px;font-weight:bold;color:#2273c9">中</div>
<div class="t" style="left:1429.3px;top:721.6px;font-size:16px;line-height:18px;font-weight:bold;color:#2273c9;font-family:'Liberation Serif',serif">°</div>
<div class="t" style="left:1436.3px;top:718.8px;font-size:19px;line-height:18px;font-weight:bold;color:#2273c9;font-family:'Liberation Serif',serif">,</div>
<div class="t" style="left:1524px;top:732.8px;font-size:6.5px;line-height:6px;font-weight:bold;color:#b8c2d3;letter-spacing:0.2px">3D</div>
</body></html>
